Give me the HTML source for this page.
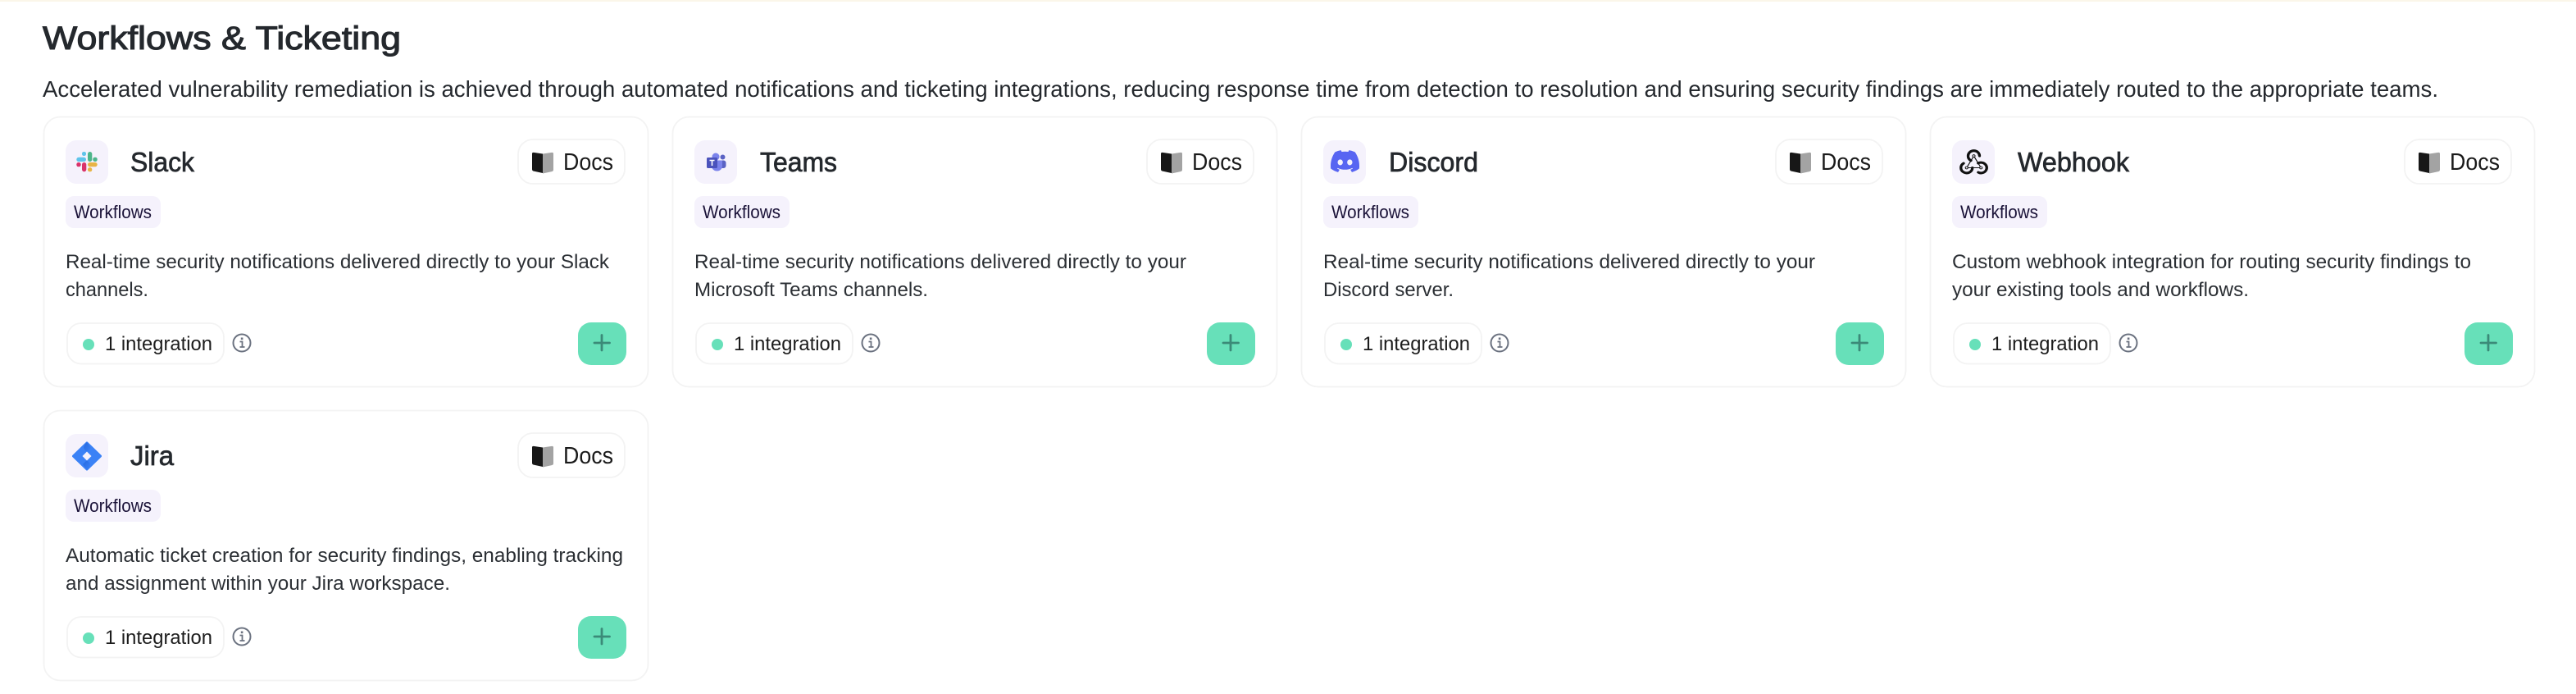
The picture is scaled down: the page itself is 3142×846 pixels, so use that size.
<!DOCTYPE html>
<html lang="en"><head><meta charset="utf-8"><title>Workflows &amp; Ticketing</title>
<style>
html,body{margin:0;padding:0;background:#fff;width:3142px;height:846px;overflow:hidden}
svg{display:block}
text{font-family:"Liberation Sans",Arial,sans-serif;white-space:pre}
.h{font-size:40px;fill:#24282d;stroke:#24282d;stroke-width:1.1px}
.p{font-size:28px;fill:#24282d}
.n{font-size:33px;fill:#24282d;stroke:#24282d;stroke-width:.7px}
.t{font-size:22.5px;fill:#1a1238}
.d{font-size:24.5px;fill:#2b2f34}
.i{font-size:24.5px;fill:#1c1c1c}
.o{font-size:28.5px;fill:#1a1a1a}
</style></head><body>
<svg xmlns="http://www.w3.org/2000/svg" width="3142" height="846" viewBox="0 0 3142 846">
<defs>
<linearGradient id="jg" x1="0" y1="0" x2="1" y2="1"><stop offset="0" stop-color="#1d5fd6"/><stop offset="1" stop-color="#3c83f6"/></linearGradient>
<g id="frame">
<rect x="53.5" y="142.5" width="737" height="329" rx="20" fill="#fff" stroke="#f3f3f3" stroke-width="1.800"/>
<rect x="80" y="171" width="52" height="53" rx="13" fill="#f5f2fc"/>
<rect x="632" y="170" width="130" height="54" rx="18" fill="#fff" stroke="#f3f3f3" stroke-width="1.800"/>
<path d="M649 187.5q0-2 2-1.6l11 1.6v23.5l-11-2.4q-2-.4-2-2.4z" fill="#171717"/>
<path d="M662 187.5l11-1.6q2-.4 2 1.6v19.2q0 2-2 2.4l-11 2.4z" fill="#a3a3a3"/>
<rect x="80" y="239" width="116" height="39" rx="10" fill="#f5f2fc"/>
<rect x="82" y="394" width="191" height="49.500" rx="17" fill="#fff" stroke="#f3f3f3" stroke-width="1.800"/>
<circle cx="108" cy="420" r="7" fill="#67e0b9"/>
<circle cx="295" cy="418" r="10.500" fill="none" stroke="#6b7280" stroke-width="2"/>
<rect x="293.800" y="411.500" width="2.600" height="2.600" fill="#6b7280"/>
<path d="M292.500 416.500h3v6M292.500 423h6" fill="none" stroke="#6b7280" stroke-width="1.800"/>
<rect x="705" y="393" width="59" height="52" rx="16" fill="#67e0b9"/>
<path d="M725 418h18.500M734 408.500v18.500" stroke="#3b8a78" stroke-width="2.800" stroke-linecap="round"/>
</g>
</defs>
<rect width="3142" height="2" fill="#fbf6e9"/>
<text class="h" x="52" y="60" textLength="437" lengthAdjust="spacingAndGlyphs">Workflows &amp; Ticketing</text>
<text class="p" x="52" y="118" textLength="2922" lengthAdjust="spacingAndGlyphs">Accelerated vulnerability remediation is achieved through automated notifications and ticketing integrations, reducing response time from detection to resolution and ensuring security findings are immediately routed to the appropriate teams.</text>

<!-- Slack -->
<g>
<use href="#frame"/>
<g>
<rect x="93.300" y="191.700" width="11.700" height="5.300" rx="2.650" fill="#5fc4ea"/><rect x="100" y="185" width="5" height="5" rx="2.300" fill="#5fc4ea"/>
<rect x="107" y="185" width="5.300" height="12" rx="2.650" fill="#4db58a"/><rect x="113.300" y="191.700" width="5.400" height="5.300" rx="2.500" fill="#4db58a"/>
<rect x="93.300" y="198" width="5.400" height="5.300" rx="2.500" fill="#d9346b"/><rect x="100" y="198" width="5.300" height="11.300" rx="2.650" fill="#d9346b"/>
<rect x="107" y="198" width="11.700" height="5.300" rx="2.650" fill="#e8b445"/><rect x="107" y="204.300" width="5.300" height="5" rx="2.300" fill="#e8b445"/>
</g>
<text class="n" x="159" y="209" textLength="78" lengthAdjust="spacingAndGlyphs">Slack</text>
<text class="o" x="687" y="207" textLength="61" lengthAdjust="spacingAndGlyphs">Docs</text>
<text class="t" x="90" y="266" textLength="95" lengthAdjust="spacingAndGlyphs">Workflows</text>
<text class="d" x="80" y="327" textLength="663" lengthAdjust="spacingAndGlyphs">Real-time security notifications delivered directly to your Slack</text>
<text class="d" x="80" y="361" textLength="101" lengthAdjust="spacingAndGlyphs">channels.</text>
<text class="i" x="128" y="427" textLength="131" lengthAdjust="spacingAndGlyphs">1 integration</text>
</g>

<!-- Teams -->
<g transform="translate(767 0)">
<use href="#frame"/>
<text class="n" x="160" y="209" textLength="94" lengthAdjust="spacingAndGlyphs">Teams</text>
<text class="o" x="687" y="207" textLength="61" lengthAdjust="spacingAndGlyphs">Docs</text>
<text class="t" x="90" y="266" textLength="95" lengthAdjust="spacingAndGlyphs">Workflows</text>
<text class="d" x="80" y="327" textLength="600" lengthAdjust="spacingAndGlyphs">Real-time security notifications delivered directly to your</text>
<text class="d" x="80" y="361" textLength="285" lengthAdjust="spacingAndGlyphs">Microsoft Teams channels.</text>
<text class="i" x="128" y="427" textLength="131" lengthAdjust="spacingAndGlyphs">1 integration</text>
<g transform="translate(-767 0)">
<circle cx="881.500" cy="191.500" r="3" fill="#5a62c4"/>
<rect x="877" y="195.500" width="8.500" height="9.500" rx="3" fill="#5a62c4"/>
<circle cx="873" cy="191" r="4.500" fill="#7b83eb"/>
<path d="M868 195.500h13v7a6.500 6 0 0 1-13 0z" fill="#7b83eb"/>
<rect x="862" y="192" width="13" height="13" rx="1.500" fill="#4b53bc"/>
<path d="M865.500 195.500h6M868.500 195.500v6.500" stroke="#fff" stroke-width="1.600"/>
</g>
</g>

<!-- Discord -->
<g transform="translate(1534 0)">
<use href="#frame"/>
<text class="n" x="160" y="209" textLength="109" lengthAdjust="spacingAndGlyphs">Discord</text>
<text class="o" x="687" y="207" textLength="61" lengthAdjust="spacingAndGlyphs">Docs</text>
<text class="t" x="90" y="266" textLength="95" lengthAdjust="spacingAndGlyphs">Workflows</text>
<text class="d" x="80" y="327" textLength="600" lengthAdjust="spacingAndGlyphs">Real-time security notifications delivered directly to your</text>
<text class="d" x="80" y="361" textLength="159" lengthAdjust="spacingAndGlyphs">Discord server.</text>
<text class="i" x="128" y="427" textLength="131" lengthAdjust="spacingAndGlyphs">1 integration</text>
<path transform="translate(89 179) scale(1.46)" fill="#5865f2" d="M20.317 4.3698a19.7913 19.7913 0 00-4.8851-1.5152.0741.0741 0 00-.0785.0371c-.211.3753-.4447.8648-.6083 1.2495-1.8447-.2762-3.68-.2762-5.4868 0-.1636-.3933-.4058-.8742-.6177-1.2495a.077.077 0 00-.0785-.037 19.7363 19.7363 0 00-4.8852 1.515.0699.0699 0 00-.0321.0277C.5334 9.0458-.319 13.5799.0992 18.0578a.0824.0824 0 00.0312.0561c2.0528 1.5076 4.0413 2.4228 5.9929 3.0294a.0777.0777 0 00.0842-.0276c.4616-.6304.8731-1.2952 1.226-1.9942a.076.076 0 00-.0416-.1057c-.6528-.2476-1.2743-.5495-1.8722-.8923a.077.077 0 01-.0076-.1277c.1258-.0943.2517-.1923.3718-.2914a.0743.0743 0 01.0776-.0105c3.9278 1.7933 8.18 1.7933 12.0614 0a.0739.0739 0 01.0785.0095c.1202.099.246.1981.3728.2924a.077.077 0 01-.0066.1276 12.2986 12.2986 0 01-1.873.8914.0766.0766 0 00-.0407.1067c.3604.698.7719 1.3628 1.225 1.9932a.076.076 0 00.0842.0286c1.961-.6067 3.9495-1.5219 6.0023-3.0294a.077.077 0 00.0313-.0552c.5004-5.177-.8382-9.6739-3.5485-13.6604a.061.061 0 00-.0312-.0286zM8.02 15.3312c-1.1825 0-2.1569-1.0857-2.1569-2.419 0-1.3332.9555-2.4189 2.157-2.4189 1.2108 0 2.1757 1.0952 2.1568 2.419 0 1.3332-.9555 2.4189-2.1569 2.4189zm7.9748 0c-1.1825 0-2.1569-1.0857-2.1569-2.419 0-1.3332.9554-2.4189 2.1569-2.4189 1.2108 0 2.1757 1.0952 2.1568 2.419 0 1.3332-.946 2.4189-2.1568 2.4189Z"/>
</g>

<!-- Webhook -->
<g transform="translate(2301 0)">
<use href="#frame"/>
<text class="n" x="160" y="209" textLength="136" lengthAdjust="spacingAndGlyphs">Webhook</text>
<text class="o" x="687" y="207" textLength="61" lengthAdjust="spacingAndGlyphs">Docs</text>
<text class="t" x="90" y="266" textLength="95" lengthAdjust="spacingAndGlyphs">Workflows</text>
<text class="d" x="80" y="327" textLength="633" lengthAdjust="spacingAndGlyphs">Custom webhook integration for routing security findings to</text>
<text class="d" x="80" y="361" textLength="362" lengthAdjust="spacingAndGlyphs">your existing tools and workflows.</text>
<text class="i" x="128" y="427" textLength="131" lengthAdjust="spacingAndGlyphs">1 integration</text>
<g transform="translate(85.500 177.300) scale(1.75 1.6)" fill="none" stroke-linecap="round" stroke-linejoin="round">
<g stroke="#111" stroke-width="1.900">
<path d="M4.876 13.61a4 4 0 1 0 6.124 3.39"/>
<path d="M15.066 20.502a4 4 0 1 0 1.934-7.502c-.706 0-1.424.179-2 .5"/>
<path d="M16 8a4 4 0 1 0-8 0c0 1.506.77 2.818 2 3.500"/>
</g>
<path d="M12 8l-5 9h10z" stroke="#111" stroke-width=".7"/>
<circle cx="12" cy="8" r=".9" fill="#f5f2fc" stroke="#111" stroke-width=".6"/>
<circle cx="7" cy="17" r=".9" fill="#f5f2fc" stroke="#111" stroke-width=".6"/>
<circle cx="17" cy="17" r=".9" fill="#f5f2fc" stroke="#111" stroke-width=".6"/>
</g>
</g>

<!-- Jira -->
<g transform="translate(0 358)">
<use href="#frame"/>
<text class="n" x="159" y="209" textLength="53" lengthAdjust="spacingAndGlyphs">Jira</text>
<text class="o" x="687" y="207" textLength="61" lengthAdjust="spacingAndGlyphs">Docs</text>
<text class="t" x="90" y="266" textLength="95" lengthAdjust="spacingAndGlyphs">Workflows</text>
<text class="d" x="80" y="327" textLength="680" lengthAdjust="spacingAndGlyphs">Automatic ticket creation for security findings, enabling tracking</text>
<text class="d" x="80" y="361" textLength="469" lengthAdjust="spacingAndGlyphs">and assignment within your Jira workspace.</text>
<text class="i" x="128" y="427" textLength="131" lengthAdjust="spacingAndGlyphs">1 integration</text>
<g transform="translate(0 -358)">
<path d="M106 540l16.500 16-16.500 16-16.500-16z" fill="#3b82f6" stroke="#3b82f6" stroke-width="3" stroke-linejoin="round"/>
<path d="M106 539c-5 5-5 8 0 12l5-5z" fill="url(#jg)" opacity=".75"/>
<path d="M106 573c5-5 5-8 0-12l-5 5z" fill="url(#jg)" opacity=".75"/>
<path d="M106 550.500l5.500 5.500-5.500 5.500-5.500-5.500z" fill="#f5f2fc"/>
</g>
</g>
</svg>
</body></html>
